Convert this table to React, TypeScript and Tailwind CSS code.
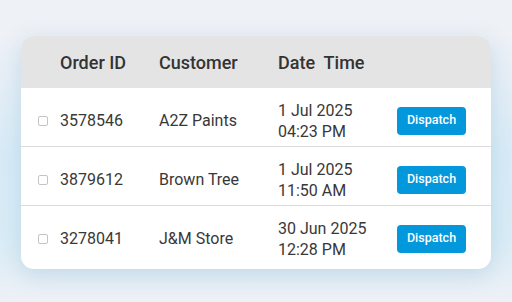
import React from 'react';

// Pending orders table with a dispatch action per row
type Order = { id: string; customer: string; date: string; time: string };

const ORDERS: Order[] = [
  { id: '3578546', customer: 'A2Z Paints', date: '1 Jul 2025', time: '04:23 PM' },
  { id: '3879612', customer: 'Brown Tree', date: '1 Jul 2025', time: '11:50 AM' },
  { id: '3278041', customer: 'J&M Store', date: '30 Jun 2025', time: '12:28 PM' },
];

const COLS = 'grid grid-cols-[22px_99px_119px_119px_69px] pl-[17px]';

function Row({ order, last }: { order: Order; last: boolean }) {
  return (
    <div
      className={`${COLS} items-center text-[16px] text-[#383838] ${
        last ? 'h-[63px] pt-[2px]' : 'h-[59px] pt-[7px] border-b border-[#dcdcdc]'
      }`}
    >
      <span className="block w-[10px] h-[10px] rounded-[2px] border border-[#c4c4c4] bg-white" />
      <span>{order.id}</span>
      <span>{order.customer}</span>
      <div className="leading-[21px]">
        <div>{order.date}</div>
        <div>{order.time}</div>
      </div>
      <button className="h-[28px] w-[69px] rounded-[4px] bg-[#0397db] text-white text-[12.5px] font-medium">
        Dispatch
      </button>
    </div>
  );
}

export default function App() {
  return (
    <div
      className="w-[512px] h-[302px] pt-[36px] pl-[21px] bg-[linear-gradient(180deg,#eef1f6_12%,#d8ebf6_50%,#d9ecf6_78%,#eef1f6_100%)]"
      style={{ fontFamily: 'Roboto, "Noto Sans", sans-serif' }}
    >
      <div className="w-[470px] rounded-[13px] bg-white overflow-hidden shadow-[0_6px_22px_rgba(110,160,195,0.28)]">
        <div className={`${COLS} h-[52px] items-center bg-[#e4e4e4] text-[18px] font-medium text-[#333]`}>
          <span />
          <span>Order ID</span>
          <span>Customer</span>
          <span className="whitespace-pre">Date  Time</span>
          <span />
        </div>
        {ORDERS.map((o, i) => (
          <Row key={o.id} order={o} last={i === ORDERS.length - 1} />
        ))}
      </div>
    </div>
  );
}
